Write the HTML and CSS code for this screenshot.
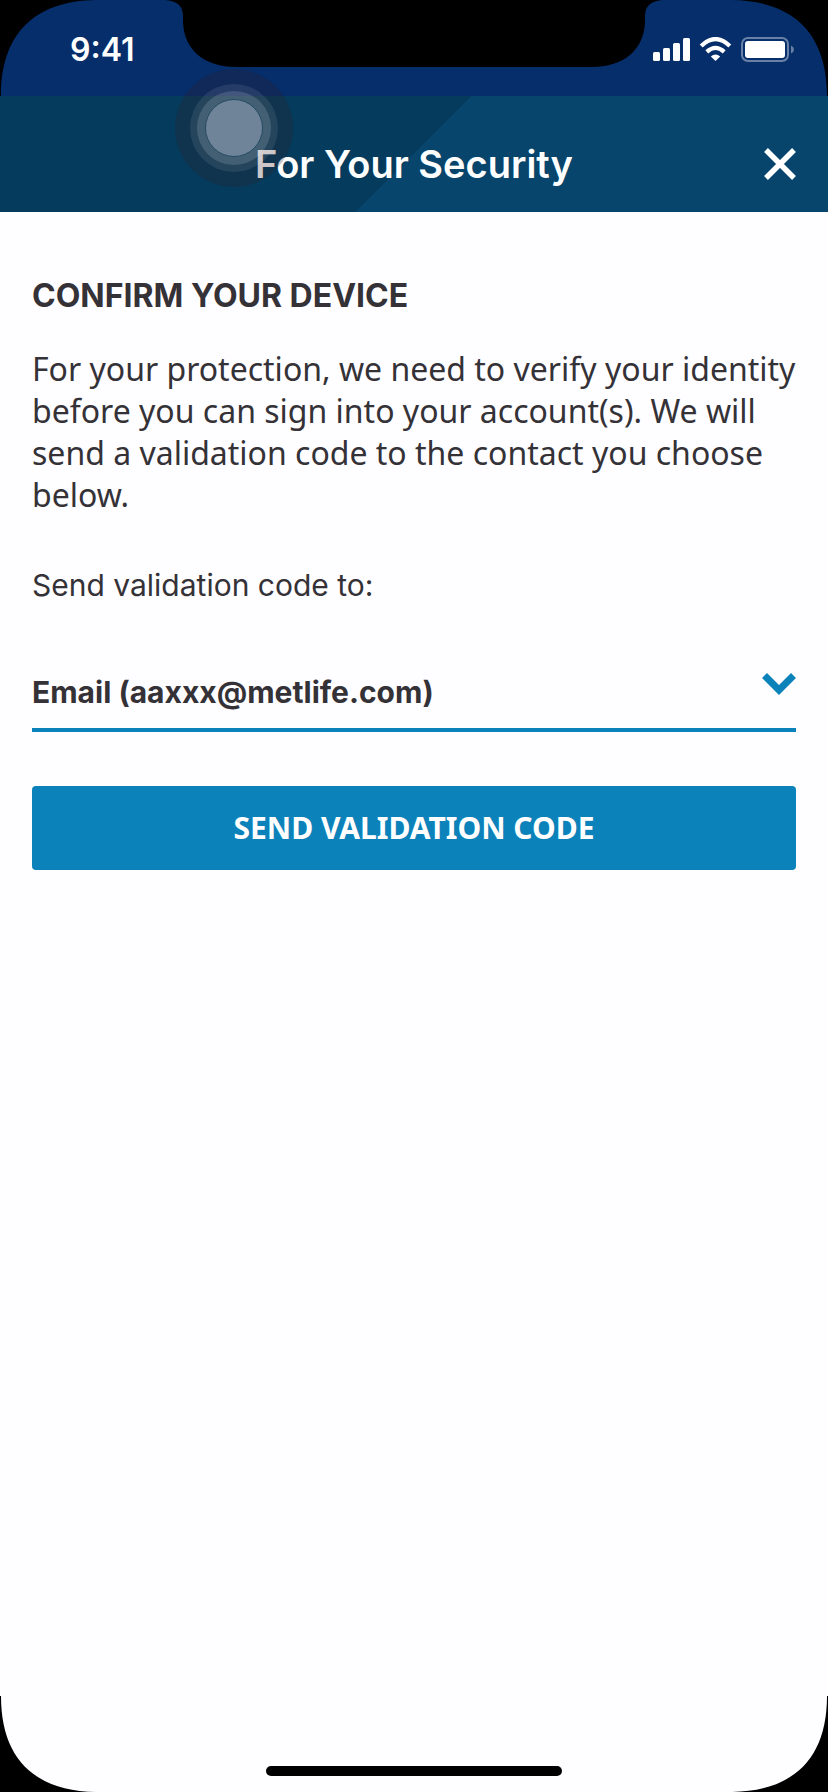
FILE: index.html
```html
<!DOCTYPE html>
<html lang="en">
<head>
<meta charset="utf-8">
<meta name="viewport" content="width=device-width, initial-scale=1">
<title>For Your Security</title>
<link rel="stylesheet" href="styles.css">
</head>
<body>
<div class="screen">
  <div class="status">
    <span class="time">9:41</span>
    <svg class="status-icons" width="142" height="26" viewBox="0 0 142 26" aria-hidden="true">
      <g fill="#fff">
        <rect x="0" y="15" width="7" height="9" rx="1.5"/>
        <rect x="10" y="11" width="7" height="13" rx="1.5"/>
        <rect x="20" y="6" width="7" height="18" rx="1.5"/>
        <rect x="30" y="1" width="7" height="23" rx="1.5"/>
        <path d="M62.500 24 L57.800 19.400 Q62.500 15.500 67.200 19.400 Z"/>
      </g>
      <g fill="none" stroke="#fff" stroke-width="4.200">
        <path d="M48.200 8.900 Q62.500 -4.700 76.800 8.900"/>
        <path d="M53.800 14.900 Q62.500 6.900 71.200 14.900"/>
      </g>
      <rect x="89" y="1" width="46" height="23" rx="6" fill="none" stroke="#fff" stroke-opacity=".4" stroke-width="2"/>
      <rect x="92" y="4" width="40" height="17" rx="3" fill="#fff"/>
      <path d="M138 8.500 Q141 10 141 12.500 T138 16.500 Z" fill="#fff" fill-opacity=".4"/>
    </svg>
    <svg class="notch" width="498" height="67" viewBox="0 0 498 67" aria-hidden="true"><path d="M0 0 Q18 1 18 16 V22 C19 49 38 67 72 67 H426 C460 67 479 49 480 22 V16 Q480 1 498 0 Z"/></svg>
  </div>
  <header class="header">
    <h1 class="title">For Your Security</h1>
    <button class="close" type="button" aria-label="Close">
      <svg width="32" height="32" viewBox="0 0 32 32" aria-hidden="true"><path d="M2 2 30 30M30 2 2 30" fill="none" stroke="#fff" stroke-width="5.400"/></svg>
    </button>
  </header>
  <main class="content">
    <h2 class="heading">CONFIRM YOUR DEVICE</h2>
    <p class="copy">For your protection, we need to verify your identity before you can sign into your account(s). We will send a validation code to the contact you choose below.</p>
    <form class="form">
      <label class="label" for="contact">Send validation code to:</label>
      <div class="field">
        <select class="select" id="contact"><option>Email (aaxxx@metlife.com)</option></select>
        <svg class="chevron" width="34" height="22" viewBox="0 0 34 22" aria-hidden="true"><path d="M2.500 2.500 17 17 31.500 2.500" fill="none" stroke="#0c82bb" stroke-width="7"/></svg>
      </div>
      <button class="submit" type="button">SEND VALIDATION CODE</button>
    </form>
  </main>
  <div class="home"></div>
  <svg class="touch" width="120" height="120" viewBox="0 0 120 120" aria-hidden="true">
    <circle cx="60" cy="60" r="59" fill="#351b24" fill-opacity=".25"/>
    <circle cx="60" cy="60" r="44" fill="#fff" fill-opacity=".09"/>
    <circle cx="60" cy="60" r="37" fill="#fff" fill-opacity=".14"/>
    <circle cx="60" cy="60" r="28.500" fill="#9caabd" fill-opacity=".5" stroke="#264b66" stroke-width="1"/>
  </svg>
  <svg class="corner tl" viewBox="0 0 96 96" aria-hidden="true"><path d="M0 0H96C34 1 1 34 1 96H0Z"/></svg>
  <svg class="corner tr" viewBox="0 0 96 96" aria-hidden="true"><path d="M0 0H96C34 1 1 34 1 96H0Z"/></svg>
  <svg class="corner bl" viewBox="0 0 96 96" aria-hidden="true"><path d="M0 0H96C34 1 1 34 1 96H0Z"/></svg>
  <svg class="corner br" viewBox="0 0 96 96" aria-hidden="true"><path d="M0 0H96C34 1 1 34 1 96H0Z"/></svg>
</div>
</body>
</html>
```
FILE: styles.css
```css
* { box-sizing: border-box; }
body { margin: 0; background: #fefdff; color: #343237; font-family: Inter, sans-serif; }
.screen { position: relative; min-height: 100vh; display: flex; flex-direction: column; overflow: hidden; }
.status {
  position: relative;
  height: 96px;
  padding: 4px 33px 0 70px;
  display: flex;
  align-items: center;
  justify-content: space-between;
  background: #052e6b;
  color: #fff;
}
.time { font-size: 32px; line-height: 40px; font-weight: 600; }
.status-icons { display: block; }
.notch { position: absolute; top: 0; left: 50%; transform: translateX(-50%); }
.header {
  height: 116px;
  padding: 20px 32px 0;
  display: grid;
  grid-template-columns: 32px 1fr 32px;
  align-items: center;
  background: linear-gradient(135deg, #053b5d 50%, #07456c 50%);
}
.title { grid-column: 2; margin: 0; text-align: center; color: #fff; font-size: 38px; line-height: 48px; font-weight: 600; }
.close { padding: 0; border: 0; background: none; cursor: pointer; }
.close svg { display: block; }
.content { flex: 1; padding: 64px 32px; }
.heading { margin: 0; font-size: 32px; line-height: 40px; font-weight: 700; }
.copy { margin: 32px 0 0; font: 32px/42px "Noto Sans", sans-serif; }
.form { margin-top: 48px; display: flex; flex-direction: column; }
.label { font-size: 30px; line-height: 42px; }
.field { position: relative; margin-top: 50px; border-bottom: 4px solid #0c82bb; }
.select {
  display: block;
  width: 100%;
  height: 72px;
  padding: 0;
  border: 0;
  appearance: none;
  background: none;
  color: inherit;
  font: 700 30px/40px Inter, sans-serif;
}
.chevron { position: absolute; top: 17px; right: 0; pointer-events: none; }
.submit {
  height: 84px;
  margin-top: 54px;
  border: 0;
  border-radius: 4px;
  background: #0c82bb;
  color: #fff;
  font: 700 30px/40px "Noto Sans", sans-serif;
}
.home { width: 296px; height: 10px; margin: 0 auto 16px; border-radius: 5px; background: #000; }
.touch { position: absolute; top: 68px; left: 174px; pointer-events: none; }
.corner { position: absolute; width: 96px; height: 96px; pointer-events: none; }
.tl { top: 0; left: 0; }
.tr { top: 0; right: 0; transform: scaleX(-1); }
.bl { bottom: 0; left: 0; transform: scaleY(-1); }
.br { bottom: 0; right: 0; transform: scale(-1); }
```
